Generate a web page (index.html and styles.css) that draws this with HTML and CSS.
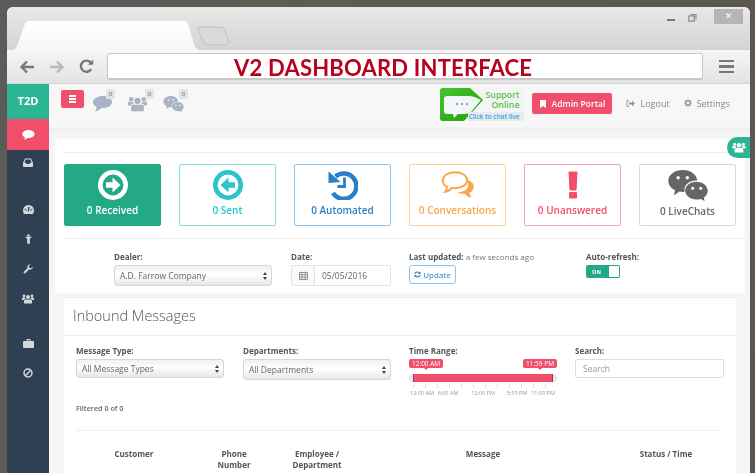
FILE: index.html
```html
<!DOCTYPE html>
<html lang="en">
<head>
<meta charset="utf-8">
<title>V2 Dashboard Interface</title>
<link rel="stylesheet" href="styles.css">
</head>
<body>
<div class="window">
  <div class="titlebar">
    <svg class="tabs" width="225" height="43" viewBox="0 0 225 43">
      <defs><linearGradient id="tabfill" x1="0" y1="0" x2="0" y2="1"><stop offset="0" stop-color="#ffffff"/><stop offset="1" stop-color="#f6f6f6"/></linearGradient></defs>
      <path d="M5 43 Q8 43 10 39 L18 17 Q19 14 23 14 L176 14 Q180 14 181 17 L187 37 Q189 43 194 43Z" fill="url(#tabfill)"/>
      <path d="M191 23 Q190 20 193 20 L213 20 Q217 20 218 23 L221 33 Q222 38 218 38 L201 38 Q197 38 196 35Z" fill="#dadada" stroke="#c0c0c0" stroke-width="1"/>
    </svg>
    <div class="winctrls">
      <span class="min"></span>
      <svg class="restore" width="9" height="9" viewBox="0 0 9 9"><path d="M2.500 1.500h5.500v5M.8 2.800h5.500v5.400H.8z" fill="none" stroke="#8a8a8a" stroke-width="1.200"/></svg>
      <span class="close">&#10005;</span>
    </div>
  </div>
  <div class="toolbar">
    <div class="navs">
      <svg width="16" height="14" viewBox="0 0 16 14"><path d="M15 7H3M8 1.500 2.500 7 8 12.500" fill="none" stroke="#777" stroke-width="2.400"/></svg>
      <svg width="16" height="14" viewBox="0 0 16 14"><path d="M1 7h12M8 1.500 13.500 7 8 12.500" fill="none" stroke="#b9b9b9" stroke-width="2.400"/></svg>
      <svg width="15" height="15" viewBox="0 0 15 15"><path d="M12.200 10.200A5.600 5.600 0 1 1 11.600 3.400" fill="none" stroke="#777" stroke-width="2.400"/><path d="M8.800 5.800h5.400V.4z" fill="#777"/></svg>
    </div>
    <div class="urlbar">V2 DASHBOARD INTERFACE</div>
    <div class="burger"><span></span><span></span><span></span></div>
  </div>
  <div class="app">
    <nav class="sidebar">
      <div class="logo">T2D</div>
      <div class="side-item active"><svg width="13" height="10" viewBox="0 0 11 9"><path d="M5.500 0C8.500 0 11 1.600 11 3.600S8.500 7.200 5.500 7.200L4.500 7.200C3.500 8 2.500 8.600 1.500 8.800 2 8.200 2.300 7.500 2.300 6.700 .9 6 0 4.900 0 3.600 0 1.600 2.500 0 5.500 0Z" fill="#fff"/></svg></div>
      <div class="side-item inbox"><svg width="10" height="9" viewBox="0 0 10 9"><path d="M2 .5h6L10 5v3.200q0 .8-.8.800H.8Q0 9 0 8.200V5zM2.600 1.600 1.400 4.800H3l.6 1.200h2.800L7 4.800h1.600L7.400 1.600z" fill="#d3d8de" fill-rule="evenodd"/></svg></div>
      <div class="side-group">
        <div class="side-item"><svg width="11" height="9" viewBox="0 0 11 9"><path d="M5.500 0a5.500 5.500 0 0 1 5.500 5.500c0 1.200-.4 2.500-1 3.500H1C.4 8 0 6.700 0 5.500A5.500 5.500 0 0 1 5.500 0ZM5 2v4.500h1L6.500 2ZM2 3.500l-.6.600 2 2 .6-.6Zm7 0L7 5.500l.6.600 2-2Z" fill="#d3d8de" fill-rule="evenodd"/></svg></div>
        <div class="side-item"><svg width="7" height="10" viewBox="0 0 8 11"><circle cx="4" cy="1.500" r="1.500" fill="#d3d8de"/><path d="M0 3h8L5.500 5.500V11h-3V5.500z" fill="#d3d8de"/></svg></div>
        <div class="side-item"><svg width="10" height="10" viewBox="0 0 10 10"><path d="M9.800 2.400A3 3 0 0 1 5.900 5.500L1.800 9.700.3 8.200 4.500 4.100A3 3 0 0 1 7.600.2L5.800 2 6.300 3.700 8 4.200z" fill="#d3d8de"/></svg></div>
        <div class="side-item"><svg width="12" height="10" viewBox="0 0 12 10"><use href="#users"/></svg></div>
      </div>
      <div class="side-group">
        <div class="side-item"><svg width="11" height="9" viewBox="0 0 11 9"><path d="M3.500 2V.8q0-.8.800-.8h2.400q.8 0 .8.800V2H10q1 0 1 1v5q0 1-1 1H1Q0 9 0 8V3q0-1 1-1ZM4.500 2h2V1h-2Z" fill="#d3d8de" fill-rule="evenodd"/></svg></div>
        <div class="side-item"><svg width="10" height="10" viewBox="0 0 10 10"><circle cx="5" cy="5" r="4" fill="none" stroke="#d3d8de" stroke-width="1.500"/><path d="M2.300 7.700 7.700 2.300" stroke="#d3d8de" stroke-width="1.500"/></svg></div>
      </div>
    </nav>
    <main class="content">
      <header class="topbar">
        <div class="top-left">
          <button class="menu-btn"><span></span><span></span><span></span></button>
          <div class="notif">
            <svg width="19" height="16" viewBox="0 0 19 16"><path d="M10 0c5 0 9 2.600 9 6s-4 6-9 6l-1.500-.1C6.500 13.800 4.500 15 1.800 15.500 3 14.200 3.600 12.800 3.500 10.900 1.300 9.800 0 8 0 6 0 2.600 5 0 10 0Z" fill="#a9b3c4"/></svg>
            <span class="badge">0</span>
          </div>
          <div class="notif notif-users">
            <svg width="19" height="16" viewBox="0 0 12 10"><use href="#users" class="use-grey"/></svg>
            <span class="badge">0</span>
          </div>
          <div class="notif notif-chat">
            <svg width="21" height="16" viewBox="0 0 28 22"><use href="#wechat" class="use-grey"/></svg>
            <span class="badge">0</span>
          </div>
        </div>
        <div class="top-right">
          <div class="support">
            <svg class="support-art" width="84" height="33" viewBox="0 0 84 33">
              <defs><linearGradient id="supportgreen" x1="0" y1="0" x2="1" y2="1"><stop offset="0" stop-color="#49c42b"/><stop offset="1" stop-color="#1f9f10"/></linearGradient></defs>
              <path d="M2 0H30L43 12 24 33H2Q0 33 0 31V2Q0 0 2 0Z" fill="url(#supportgreen)"/>
              <path d="M7 8H29Q34 8 41 12L31 24Q28 26 24 26H18L14 30 13 26H7Q4 26 4 23V11Q4 8 7 8Z" fill="#f4f5f5"/>
              <circle cx="17" cy="16" r="1" fill="#2f95e8"/><circle cx="22" cy="16" r="1" fill="#2f95e8"/><circle cx="27" cy="16" r="1" fill="#2f95e8"/>
            </svg>
            <div class="support-text"><span>Support</span><span>Online</span></div>
            <div class="support-link">Click to chat live</div>
          </div>
          <button class="admin-btn">
            <svg width="6" height="8" viewBox="0 0 6 8"><path d="M0 0h6v8L3 6 0 8z" fill="#fff"/></svg>
            Admin Portal
          </button>
          <a class="toplink logout">
            <svg width="9" height="7" viewBox="0 0 9 7"><path d="M3 .5H1v6h2" fill="none" stroke="#999"/><path d="M3 2.500h3V.5l3 3-3 3v-2H3z" fill="#999"/></svg>
            Logout
          </a>
          <a class="toplink">
            <svg width="8" height="8" viewBox="0 0 8 8"><circle cx="4" cy="4" r="2.200" fill="none" stroke="#999" stroke-width="1.600"/><path d="M4 0v1.500M4 6.500V8M0 4h1.500M6.500 4H8M1.200 1.200l1 1M5.800 5.800l1 1M6.800 1.200l-1 1M2.200 5.800l-1 1" stroke="#999" stroke-width="1.100"/></svg>
            Settings
          </a>
        </div>
      </header>
      <div class="people-tab"><svg width="14" height="11" viewBox="0 0 12 10"><use href="#users" class="use-white"/></svg></div>
      <section class="overview">
        <div class="stats">
          <div class="stat stat-green">
            <svg width="30" height="30" viewBox="0 0 30 30"><circle cx="15" cy="15" r="12.700" fill="none" stroke="currentColor" stroke-width="4.600"/><path d="M8 12.300h6.500V7.500l8 7.500-8 7.500v-4.800H8z" fill="currentColor"/></svg>
            <span>0 Received</span>
          </div>
          <div class="stat stat-teal">
            <svg width="30" height="30" viewBox="0 0 30 30"><circle cx="15" cy="15" r="12.700" fill="none" stroke="currentColor" stroke-width="4.600"/><path d="M22 12.300h-6.500V7.500l-8 7.500 8 7.500v-4.800H22z" fill="currentColor"/></svg>
            <span>0 Sent</span>
          </div>
          <div class="stat stat-blue">
            <svg width="30" height="30" viewBox="0 0 30 30"><path d="M7.500 6.500A12.700 12.700 0 1 1 5 23" fill="none" stroke="currentColor" stroke-width="4.600"/><path d="M.5 1.500 12.500 12 .5 13z" fill="currentColor"/><path d="M16.500 7.500v9h-7" fill="none" stroke="currentColor" stroke-width="2.800"/></svg>
            <span>0 Automated</span>
          </div>
          <div class="stat stat-orange">
            <svg width="34" height="30" viewBox="0 0 34 30"><path d="M27.500 9.500c5 1.600 6.500 5 5.500 8.500-.6 2-2 3.500-4 4.500.2 2 .8 3.500 2 5-3-.3-5.500-1.700-7-4-2.500.3-5-.2-7.500-1.500 6 .2 11-2.500 11-8 0-1.500-.2-3-.5-4.500Z" fill="currentColor"/><path d="M14 1.200c7 0 12.500 3.600 12.500 8.300S21 17.800 14 17.800c-1.300 0-2.300-.1-3.300-.3-1.800 2.200-4.200 3.700-7 4 1.200-1.300 2-2.800 2-5.100C2.800 15 1.200 12.400 1.200 9.500 1.200 4.800 7 1.200 14 1.200Z" fill="#fff" stroke="currentColor" stroke-width="2"/></svg>
            <span>0 Conversations</span>
          </div>
          <div class="stat stat-red">
            <svg width="10" height="28" viewBox="0 0 10 28"><path d="M1 1h8l-1 18H2zM1.500 21.500h7V27h-7z" fill="currentColor" stroke="currentColor" stroke-linejoin="round"/></svg>
            <span>0 Unanswered</span>
          </div>
          <div class="stat stat-grey">
            <svg width="40" height="32" viewBox="0 0 28 22"><use href="#wechat" class="use-dark"/></svg>
            <span>0 LiveChats</span>
          </div>
        </div>
        <div class="filters">
          <div class="field dealer">
            <label>Dealer:</label>
            <div class="select">A.D. Farrow Company<svg class="updown" width="4" height="8" viewBox="0 0 4 8"><path d="M2 0l2 3H0zM2 8 0 5h4z" fill="#444"/></svg></div>
          </div>
          <div class="field date">
            <label>Date:</label>
            <div class="date-group">
              <span class="date-addon"><svg width="9" height="9" viewBox="0 0 9 9"><path d="M.5 1.500h8v7h-8zM.5 3.500h8M2.500 .5v2M6.500 .5v2M3 3.500v5M6 3.500v5M.5 6h8" fill="none" stroke="#888" stroke-width=".9"/></svg></span>
              <input class="date-input" type="text" value="05/05/2016">
            </div>
          </div>
          <div class="field updated">
            <label>Last updated: <em>a few seconds ago</em></label>
            <button class="update-btn"><svg width="7" height="7" viewBox="0 0 8 8"><path d="M1 3.500A3 3 0 0 1 6.500 2.500M7 4.500A3 3 0 0 1 1.500 5.500" fill="none" stroke="#2a7fc9" stroke-width="1.200"/><path d="M7.500.5v3h-3zM.5 7.500v-3h3z" fill="#2a7fc9"/></svg>Update</button>
          </div>
          <div class="field refresh">
            <label>Auto-refresh:</label>
            <div class="toggle"><span class="toggle-on">ON</span><span class="toggle-knob"></span></div>
          </div>
        </div>
      </section>
      <section class="inbound">
        <h1>Inbound Messages</h1>
        <div class="controls">
          <div class="field type">
            <label>Message Type:</label>
            <div class="select small">All Message Types<svg class="updown" width="4" height="8" viewBox="0 0 4 8"><path d="M2 0l2 3H0zM2 8 0 5h4z" fill="#444"/></svg></div>
          </div>
          <div class="field dept">
            <label>Departments:</label>
            <div class="select">All Departments<svg class="updown" width="4" height="8" viewBox="0 0 4 8"><path d="M2 0l2 3H0zM2 8 0 5h4z" fill="#444"/></svg></div>
          </div>
          <div class="field time">
            <label>Time Range:</label>
            <div class="slider">
              <span class="tip tip-left">12:00 AM</span>
              <span class="tip tip-right">11:59 PM</span>
              <div class="track"><div class="range"></div></div>
              <div class="ticks"></div>
              <div class="tick-labels"><span>12:00 AM</span><span>6:00 AM</span><span>12:00 PM</span><span>5:59 PM</span><span>11:59 PM</span></div>
            </div>
          </div>
          <div class="field search">
            <label>Search:</label>
            <input class="search-input" type="text" placeholder="Search">
          </div>
        </div>
        <p class="filtered">Filtered 0 of 0</p>
        <div class="table-head">
          <span>Customer</span>
          <span>Phone<br>Number</span>
          <span>Employee /<br>Department</span>
          <span>Message</span>
          <span>Status / Time</span>
        </div>
      </section>
    </main>
  </div>
</div>
<svg class="defs" width="0" height="0">
  <defs>
    <g id="users">
      <circle cx="6" cy="3" r="2"/><circle cx="2" cy="2" r="1.400"/><circle cx="10" cy="2" r="1.400"/>
      <path d="M3 5.500h6Q10 5.500 10 7v2.500H2V7Q2 5.500 3 5.500ZM0 6V4.200Q0 3.600.8 3.600H2.800Q3.200 4.500 3.800 4.900 2 5 1.500 6ZM12 6V4.200Q12 3.600 11.200 3.600H9.200Q8.800 4.500 8.200 4.900 10 5 10.500 6Z"/>
    </g>
    <g id="wechat">
      <path d="M10.500 0C16 0 20.500 3.500 20.500 7.500c-4.500-.5-9 2.500-9 6.500 0 .6 0 1 .2 1.500-1.300.2-2.500 0-3.700-.2L4 18l.8-3.600C2 13 0 10.500 0 7.700 0 3.400 4.500 0 10.500 0Z"/>
      <path d="M20 8.300c4.500 0 8 3 8 6.500 0 2-1.200 3.700-2.800 4.900l.6 2.300-2.800-1.400c-1 .3-2 .4-3 .4-4.500 0-8-3-8-6.400 0-3.500 3.500-6.300 8-6.300Z"/>
      <g class="eyes"><circle cx="7" cy="5.500" r="1.200"/><circle cx="13.500" cy="5.500" r="1.200"/><circle cx="17.300" cy="13" r="1.100"/><circle cx="23" cy="13" r="1.100"/></g>
    </g>
  </defs>
</svg>
</body>
</html>
```

FILE: styles.css
```css
* { box-sizing: border-box; }
html, body { margin: 0; height: 473px; overflow: hidden; }
body {
  background: linear-gradient(100deg, #5b5b59 0%, #5e5c54 40%, #5a554f 100%);
  font-family: "Open Sans", "Liberation Sans", sans-serif;
  color: #666;
}
.defs { position: absolute; }
.window {
  margin: 7px 5px 0 7px;
  height: 466px;
  border-radius: 6px 6px 0 0;
  overflow: hidden;
  display: flex;
  flex-direction: column;
  background: #f5f5f6;
  filter: blur(.5px);
}
.titlebar {
  height: 43px;
  flex: none;
  display: flex;
  justify-content: space-between;
  background: linear-gradient(#e9e9e9, #d3d3d3);
}
.tabs { display: block; }
.winctrls { display: flex; align-items: flex-start; gap: 13px; padding: 2px 7px 0 0; }
.min { width: 8px; height: 2px; background: #777; margin-top: 10px; }
.restore { margin-top: 4px; }
.close {
  width: 29px; height: 15px; margin-left: 4px;
  background: #b5b5b5; color: #fff;
  font-size: 9px; line-height: 15px; text-align: center;
  font-family: "DejaVu Sans", sans-serif;
}
.toolbar {
  height: 34px;
  flex: none;
  display: flex;
  align-items: center;
  padding: 0 16px 0 12px;
  background: linear-gradient(#f6f6f6, #e3e3e3);
  border-bottom: 1px solid #d5d5d5;
}
.navs { display: flex; align-items: center; gap: 14px; width: 88px; }
.urlbar {
  flex: 1;
  height: 27px;
  margin-right: 16px;
  background: #fff;
  border: 1px solid #c8c8c8;
  border-bottom-width: 2px;
  border-radius: 3px;
  font-family: Lato, "Liberation Sans", sans-serif;
  font-weight: 700;
  font-size: 22px;
  line-height: 27px;
  color: #b8001f;
  padding-left: 126px;
  letter-spacing: .2px;
  white-space: nowrap;
}
.burger { display: flex; flex-direction: column; gap: 3px; width: 15px; }
.burger span { height: 2.500px; background: #777; }

.app { flex: 1; display: flex; min-height: 0; }
.sidebar { width: 42px; flex: none; background: #2f4052; display: flex; flex-direction: column; }
.logo {
  height: 35px;
  background: #2bb593;
  color: #fff;
  font-weight: 700;
  font-size: 11px;
  line-height: 34px;
  text-align: center;
}
.side-item { height: 30px; display: flex; align-items: center; justify-content: center; }
.side-item.active { background: #f04e6a; height: 31px; }
.side-item.inbox { height: 24px; }
.side-group { margin-top: 20px; }
.side-group + .side-group { margin-top: 14px; }
.sidebar use { fill: #d3d8de; }

.content { flex: 1; position: relative; min-width: 0; }
.topbar {
  height: 49px;
  display: flex;
  justify-content: space-between;
  padding: 4px 20px 0 12px;
  background: #f7f7f8;
  border-bottom: 6px solid #f2f2f3;
}
.top-left { display: flex; align-items: flex-start; }
.menu-btn {
  width: 23px; height: 18px; margin: 2px 9px 0 0;
  border: 0; padding: 0;
  background: #f04e6a; border-radius: 2px;
  display: flex; flex-direction: column; gap: 1.500px;
  align-items: center; justify-content: center;
}
.menu-btn span { width: 7px; height: 1.500px; background: #fff; }
.notif { position: relative; width: 35px; padding-top: 8px; }
.notif:last-child { width: 30px; }
.notif svg { display: block; }
.badge {
  position: absolute; left: 13px; top: 1px;
  width: 9px; height: 10px;
  background: #dfe5e8; color: #555;
  font-size: 6px; line-height: 10px; text-align: center;
  border-radius: 1px;
}
.notif-users .badge { left: 17px; }
.notif-chat .badge { left: 16px; }
.use-grey { fill: #a9b3c4; }
.use-white { fill: #fff; }
.use-dark { fill: #666; }
#wechat .eyes { fill: #fff; }
.notif-chat svg { overflow: visible; }

.top-right { display: flex; align-items: flex-start; }
.support {
  position: relative;
  width: 84px; height: 33px;
  background: #f4f5f5;
  border-radius: 2px;
  display: flex; flex-direction: column;
  align-items: flex-end;
  padding: 2px 5px 0 0;
  overflow: hidden;
}
.support-art { position: absolute; left: 0; top: 0; }
.support-text {
  position: relative;
  display: flex; flex-direction: column; align-items: flex-end;
  font-size: 8.800px; line-height: 10px; color: #5cc04a; font-weight: 600;
}
.support-link {
  position: absolute; right: 0; bottom: 0; left: 28px;
  height: 9px; padding-right: 5px;
  text-align: right;
  background: #e6ecee;
  color: #3f9fe0; font-size: 6.500px; line-height: 9px; font-weight: 600;
  white-space: nowrap;
}
.admin-btn {
  width: 80px; height: 21px; margin: 5px 14px 0 8px;
  background: #f04e6a; border: 0; border-radius: 2px;
  color: #fff; font: 600 8.500px "Open Sans", sans-serif;
  display: flex; align-items: center; justify-content: center; gap: 6px;
  padding: 0;
}
.toplink {
  display: flex; align-items: center; gap: 5px;
  font-size: 9px; color: #888; margin-top: 9px; height: 12px;
}
.logout { margin-right: 14px; }

.people-tab {
  position: absolute; right: 0; top: 53px;
  width: 23px; height: 21px;
  background: #2bb593;
  border-radius: 11px 0 0 11px;
  display: flex; align-items: center; justify-content: center;
}
.overview {
  margin: 6px 5px 0 6px;
  height: 154px;
  background: #fff;
  padding: 13px 0 0 9px;
}
.stats {
  height: 87px;
  border-top: 1px dotted #ddd;
  border-bottom: 1px dotted #ddd;
  padding-top: 11px;
  display: flex;
  gap: 18px;
}
.stat {
  width: 97px; height: 62px;
  border: 1.500px solid;
  border-radius: 2px;
  display: flex; flex-direction: column; align-items: center;
  padding-top: 5px;
  font-size: 10px; font-weight: 600;
}
.stat svg { height: 30px; flex: none; }
.stat span { margin-top: 3px; line-height: 14px; }
.stat-green { background: #24a987; border-color: #24a987; color: #fff; }
.stat-teal { border-color: #7fe0e0; color: #2cc4cc; }
.stat-blue { border-color: #8cc2ec; color: #2a7fc9; }
.stat-orange { border-color: #fbd19e; color: #f9a64a; }
.stat-red { border-color: #f7a2b1; color: #f04e6a; }
.stat-grey { border-color: #d8d8d8; color: #666; }
.stat-grey svg { width: 40px; height: 31px; }
.stat-orange svg { margin-top: 1px; height: 29px; }

.filters { display: flex; padding: 13px 0 0 50px; }
.field label {
  display: block;
  font-size: 8px; font-weight: 700; color: #555;
  line-height: 10px; margin-bottom: 3px;
}
.field em { font-style: normal; font-weight: 400; color: #777; }
.dealer { width: 177px; }
.date { width: 118px; }
.updated { width: 177px; }
.select {
  height: 21px;
  display: flex; align-items: center; justify-content: space-between;
  padding: 0 4px 0 5px;
  background: linear-gradient(#f0f0f0, #fff 45%, #e6e6e6);
  border: 1px solid #d6d6d6;
  border-radius: 3px;
  font-size: 8.500px; color: #666;
}
.dealer .select { width: 158px; }
.date-group { display: flex; width: 100px; height: 21px; border: 1px solid #e2e2e2; border-radius: 2px; }
.date-addon { width: 23px; display: flex; align-items: center; justify-content: center; border-right: 1px solid #e2e2e2; background: #fafafa; }
.date-input { flex: 1; min-width: 0; border: 0; padding: 0 0 0 7px; font: 8.500px "Open Sans", sans-serif; color: #666; background: #fff; }
.update-btn {
  width: 47px; height: 19px;
  display: flex; align-items: center; justify-content: center; gap: 2px;
  padding: 0;
  background: #fff; border: 1.500px solid #8cc2ec; border-radius: 3px;
  color: #2a7fc9; font: 8px "Open Sans", sans-serif;
}
.toggle { display: flex; width: 34px; height: 13px; background: #24a987; border-radius: 2px; align-items: center; padding: 1px; }
.toggle-on { flex: 1; color: #fff; font-size: 5.500px; font-weight: 700; padding-left: 5px; }
.toggle-knob { width: 10px; height: 11px; background: #fff; border-radius: 1px; }

.inbound {
  margin: 4px 14px 0 15px;
  background: #fff;
  height: 200px;
  border-top: 1px solid #e8eef0;
}
.inbound h1 {
  margin: 0; padding: 8px 0 0 9px; height: 38px;
  font-size: 14.500px; font-weight: 300; line-height: 20px; color: #555;
  border-bottom: 1px solid #eee;
}
.controls { display: flex; padding: 10px 0 0 12px; height: 65px; }
.type { width: 167px; }
.type .select { width: 148px; height: 19px; }
.dept { width: 166px; }
.dept .select { width: 148px; }
.time { width: 166px; }
.search { width: 149px; }
.slider { position: relative; width: 148px; padding-top: 15px; }
.tip {
  position: absolute; top: 0;
  height: 9px; padding: 0 3px;
  background: #f04e6a; border-radius: 2px;
  color: #fff; font-size: 6.500px; line-height: 9px;
}
.tip::after {
  content: ""; position: absolute; left: 50%; bottom: -2px; margin-left: -2px;
  border: 2px solid transparent; border-bottom: 0; border-top-color: #f04e6a;
}
.tip-left { left: 0; }
.tip-right { right: 0; }
.track { height: 8px; background: #dce7ee; border-radius: 4px; padding: 0 4px; }
.range { height: 8px; background: #f04e6a; border-left: 1px solid #c2233f; border-right: 1px solid #c2233f; }
.ticks {
  height: 4px; margin: 2px 4px 0;
  background: repeating-linear-gradient(90deg, #e2e2e2 0 1px, transparent 1px 12px);
}
.tick-labels {
  display: grid; grid-template-columns: 26px 26px 44px 24px 28px;
  font-size: 5.500px; color: #999; line-height: 8px; text-align: center; white-space: nowrap; margin-top: 1px;
}
.search-input {
  display: block; width: 149px; height: 19px;
  border: 1px solid #ddd; border-radius: 2px;
  padding: 0 0 0 7px;
  font: 8.500px "Open Sans", sans-serif;
}
.search-input::placeholder { color: #999; }
.filtered { margin: 0 0 0 12px; padding-top: 2px; height: 29px; font-size: 7.200px; line-height: 10px; font-weight: 600; color: #666; }
.table-head {
  margin: 0 12px;
  border-top: 1px dotted #e6e6e6;
  padding-top: 17px;
  display: grid;
  grid-template-columns: 116px 84px 82px 250px 116px;
  text-align: center;
  font-size: 8px; font-weight: 700; line-height: 11px; color: #555;
}
```
